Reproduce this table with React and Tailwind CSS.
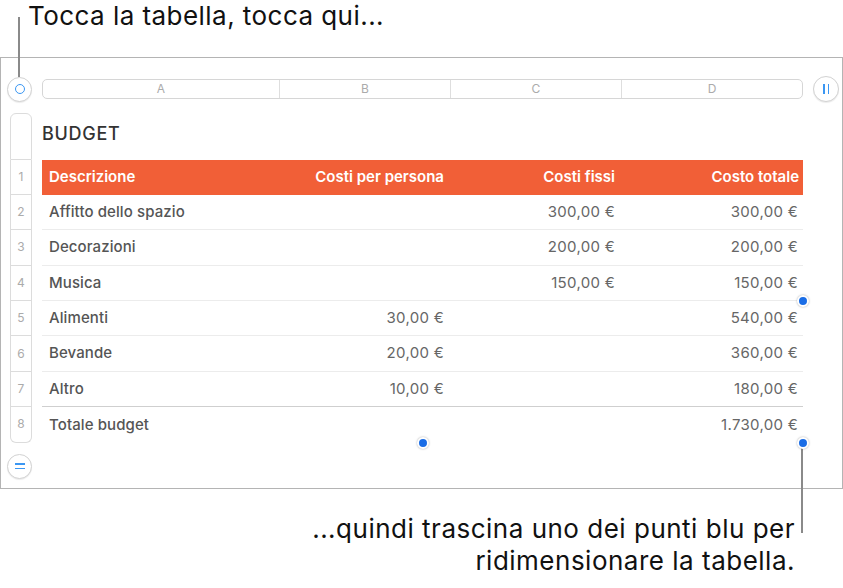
const rows = [
  { n: 2, label: "Affitto dello spazio", b: "", c: "300,00 €", d: "300,00 €" },
  { n: 3, label: "Decorazioni", b: "", c: "200,00 €", d: "200,00 €" },
  { n: 4, label: "Musica", b: "", c: "150,00 €", d: "150,00 €" },
  { n: 5, label: "Alimenti", b: "30,00 €", c: "", d: "540,00 €" },
  { n: 6, label: "Bevande", b: "20,00 €", c: "", d: "360,00 €" },
  { n: 7, label: "Altro", b: "10,00 €", c: "", d: "180,00 €" },
];

function Dot({ className }) {
  return (
    <span
      className={`absolute h-[12px] w-[12px] rounded-full border-2 border-white bg-[#1a6de6] shadow-[0_0_2px_rgba(0,0,0,0.35)] ${className}`}
    />
  );
}

function RoundButton({ children, className = "" }) {
  return (
    <div
      className={`flex h-[25px] w-[25px] shrink-0 items-center justify-center rounded-full border border-[#d2d2d2] bg-white shadow-[0_1px_1px_rgba(0,0,0,0.08)] ${className}`}
    >
      {children}
    </div>
  );
}

function RailCell({ children, first, last, h }) {
  return (
    <div
      className={`flex w-[22px] shrink-0 items-center justify-center border-x border-[#dcdcdc] text-[12px] text-[#ababab] ${
        first ? "rounded-t-[6px] border-t" : ""
      } ${last ? "rounded-b-[6px] border-b" : "border-b"} ${h}`}
    >
      {children}
    </div>
  );
}

export default function App() {
  return (
    <div
      className="relative h-[588px] w-[843px] overflow-hidden bg-white text-[#111]"
      style={{ fontFamily: "Inter, 'Noto Sans', sans-serif" }}
    >
      {/* callout lines */}
      <span className="absolute left-[18px] top-[17px] h-[60px] w-[2px] bg-[#8a8a8a]" />
      <span className="absolute left-[801px] top-[446px] h-[87px] w-[2px] bg-[#8a8a8a]" />

      <div className="h-[57px] pl-[28px] text-[26px] leading-[31px] tracking-[0.45px]">
        Tocca la tabella, tocca qui...
      </div>

      {/* frame */}
      <div className="h-[432px] w-[843px] border border-[#b4b4b4]">
        {/* column header bar */}
        <div className="flex items-center pl-[6px] pt-[18px]">
          <RoundButton>
            <span className="h-[10px] w-[10px] rounded-full border-[1.5px] border-[#3b97f3]" />
          </RoundButton>
          <div className="ml-[10px] flex h-[20px] w-[761px] rounded-[5px] border border-[#d6d6d6] text-[12px] text-[#ababab]">
            <div className="flex w-[237px] items-center justify-center border-r border-[#dedede]">A</div>
            <div className="flex w-[171px] items-center justify-center border-r border-[#dedede]">B</div>
            <div className="flex w-[171px] items-center justify-center border-r border-[#dedede]">C</div>
            <div className="flex flex-1 items-center justify-center">D</div>
          </div>
          <RoundButton className="ml-[10px] h-[26px] w-[26px]">
            <span className="flex gap-[3px]">
              <span className="h-[10px] w-[1.5px] bg-[#3b97f3]" />
              <span className="h-[10px] w-[1.5px] bg-[#3b97f3]" />
            </span>
          </RoundButton>
        </div>

        {/* body */}
        <div className="mt-[11px] flex pl-[9px]">
          <div className="flex flex-col">
            <RailCell first h="h-[46.5px]" />
            <RailCell h="h-[35.4px]">1</RailCell>
            {rows.map((r) => (
              <RailCell key={r.n} h="h-[35.4px]">
                {r.n}
              </RailCell>
            ))}
            <RailCell last h="h-[35.4px]">8</RailCell>
          </div>

          <div className="ml-[10px] flex w-[761px] flex-col">
            <div className="h-[46.5px] pt-[7px] text-[18px] font-medium tracking-[0.7px] text-[#333]">
              BUDGET
            </div>
            <div className="relative">
              <div className="flex h-[35.4px] items-center bg-[#f15f37] text-[15px] font-semibold text-white">
                <div className="w-[237px] pl-[7px]">Descrizione</div>
                <div className="w-[171px] pr-[6px] text-right">Costi per persona</div>
                <div className="w-[171px] pr-[6px] text-right">Costi fissi</div>
                <div className="flex-1 pr-[4px] text-right">Costo totale</div>
              </div>
              {rows.map((r, i) => (
                <div
                  key={r.n}
                  className={`flex h-[35.4px] items-center border-b text-[15px] ${
                    i === rows.length - 1 ? "border-[#cfcfcf]" : "border-[#ececec]"
                  }`}
                >
                  <div className="w-[237px] pl-[7px] font-medium tracking-[0.1px] text-[#555]">{r.label}</div>
                  <div className="w-[171px] pr-[6px] text-right tracking-[0.3px] text-[#666]">{r.b}</div>
                  <div className="w-[171px] pr-[6px] text-right tracking-[0.3px] text-[#666]">{r.c}</div>
                  <div className="flex-1 pr-[5px] text-right tracking-[0.3px] text-[#666]">{r.d}</div>
                </div>
              ))}
              <div className="flex h-[35.4px] items-center text-[15px]">
                <div className="w-[237px] pl-[7px] font-medium tracking-[0.1px] text-[#555]">Totale budget</div>
                <div className="w-[171px]" />
                <div className="w-[171px]" />
                <div className="flex-1 pr-[5px] text-right tracking-[0.3px] text-[#666]">1.730,00 €</div>
              </div>

              <Dot className="right-[-6px] top-1/2 -translate-y-1/2" />
              <Dot className="bottom-[-6px] left-1/2 -translate-x-1/2" />
              <Dot className="bottom-[-6px] right-[-6px]" />
            </div>
          </div>
        </div>

        <div className="mt-[11px] pl-[6px]">
          <RoundButton>
            <span className="flex flex-col gap-[3px]">
              <span className="h-[1.5px] w-[10px] bg-[#3b97f3]" />
              <span className="h-[1.5px] w-[10px] bg-[#3b97f3]" />
            </span>
          </RoundButton>
        </div>
      </div>

      <div className="pr-[48px] pt-[24px] text-right text-[26px] leading-[32px] tracking-[0.5px]">
        ...quindi trascina uno dei punti blu per
        <br />
        ridimensionare la tabella.
      </div>
    </div>
  );
}
